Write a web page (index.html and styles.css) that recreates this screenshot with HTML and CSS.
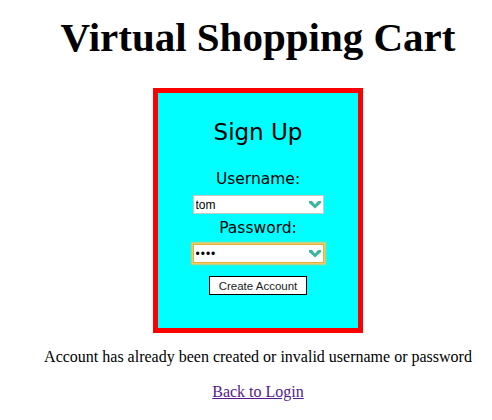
FILE: index.html
```html
<!DOCTYPE html>
<html>
<head>
<meta charset="utf-8">
<link rel="stylesheet" href="styles.css">
</head>
<body>
<h1 class="title">Virtual Shopping Cart</h1>
<div class="card">
  <h2 class="card-title">Sign Up</h2>
  <form class="form">
    <label class="label" for="u">Username:</label>
    <div class="field">
      <input class="input" id="u" type="text" value="tom">
      <svg class="field-icon" width="12" height="9" viewBox="0 0 12 9"><path d="M0 1 L3 1 L6 4.5 L9 1 L12 1 L12 3 L6 8.5 L0 3 Z" fill="#3db5a0"/></svg>
    </div>
    <label class="label" for="p">Password:</label>
    <div class="field">
      <input class="input input-focus" id="p" type="password" value="abcd" autofocus>
      <svg class="field-icon" width="12" height="9" viewBox="0 0 12 9"><path d="M0 1 L3 1 L6 4.5 L9 1 L12 1 L12 3 L6 8.5 L0 3 Z" fill="#3db5a0"/></svg>
    </div>
    <button class="btn" type="button">Create Account</button>
  </form>
</div>
<p class="msg">Account has already been created or invalid username or password</p>
<p class="back"><a class="link" href="#">Back to Login</a></p>
</body>
</html>
```
FILE: styles.css
```css
body {
  margin: 8px 0 8px 24px;
  font-family: "Liberation Serif", serif;
  font-size: 16px;
  background: #fff;
  color: #000;
}
.title {
  font-family: "Liberation Serif", serif;
  font-weight: bold;
  font-size: 41px;
  text-align: center;
  margin: 5px 0 27px;
  line-height: 48px;
}
.card {
  width: 200px;
  margin: 0 auto;
  border: 5px solid #f00;
  background: #0ff;
  box-sizing: content-box;
  height: 235px;
  text-align: center;
  font-family: "DejaVu Sans", sans-serif;
}
.card-title {
  font-family: "DejaVu Sans", sans-serif;
  font-weight: normal;
  font-size: 23px;
  margin: 24px 0 22px;
  line-height: 30px;
}
.form {
  display: flex;
  flex-direction: column;
  align-items: center;
}
.label {
  font-size: 15.5px;
  line-height: 20px;
  margin-bottom: 6px;
}
.field {
  position: relative;
  width: 131px;
  height: 19px;
  margin-bottom: 4px;
}
.input {
  box-sizing: border-box;
  width: 131px;
  height: 19px;
  border: 1px solid #c8c8c8;
  padding: 0 2px;
  font-family: "Liberation Sans", sans-serif;
  font-size: 12px;
  background: #fff;
  outline: none;
  display: block;
}
.input-focus {
  border-color: #e0b040;
  box-shadow: 0 0 0 1.5px #f5c860, 0 0 2px 2px rgba(240,190,90,0.6);
  letter-spacing: 1px;
}
.field-icon {
  position: absolute;
  right: 3px;
  top: 5px;
}
.btn {
  margin-top: 9px;
  width: 98px;
  height: 19px;
  padding: 0;
  border: 1px solid #000;
  background: #fff;
  font-family: "Liberation Sans", sans-serif;
  font-size: 11.5px;
  color: #222;
}
.msg {
  text-align: center;
  margin: 14px 0 0;
  line-height: 20px;
}
.back {
  text-align: center;
  margin: 16px 0 0;
}
.link {
  color: #551a8b;
}
```
